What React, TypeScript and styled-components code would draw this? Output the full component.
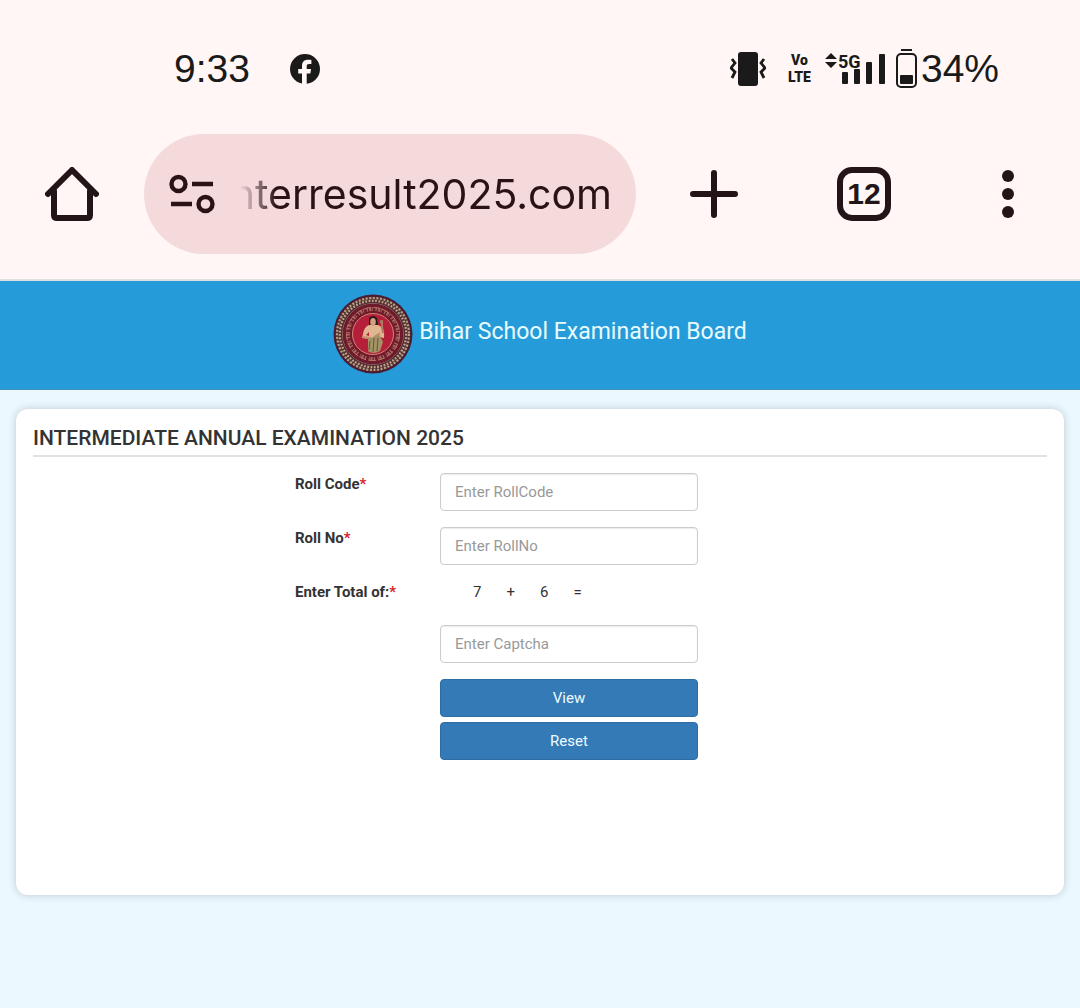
import React from "react";
import styled, { createGlobalStyle } from "styled-components";

const GlobalStyle = createGlobalStyle`
  *, *::before, *::after { box-sizing: border-box; }
  body {
    margin: 0;
    background: #ecf8ff;
    color: #333;
    font-family: Roboto, "Liberation Sans", sans-serif;
    font-size: 15px;
    line-height: 22px;
  }
`;

const BrowserChrome = styled.div`
  background: #fff6f5;
  color: #231517;
  border-bottom: 2px solid #dedfe0;
  padding-bottom: 25px;
`;

const StatusBar = styled.div`
  display: flex;
  justify-content: space-between;
  align-items: center;
  height: 134px;
  padding: 4px 81px 0 174px;
  color: #1a1a1a;
  font-family: "Liberation Sans", Arial, sans-serif;
  font-size: 39px;
  line-height: 48px;
`;

const StatusGroup = styled.div<{ $gap: number }>`
  display: flex;
  align-items: center;
  gap: ${(p) => p.$gap}px;
`;

const Volte = styled.span`
  display: flex;
  flex-direction: column;
  align-items: center;
  font-family: Roboto, sans-serif;
  font-size: 14px;
  font-weight: 900;
  line-height: 17px;
`;

const Battery = styled.span`
  display: flex;
  align-items: center;
  gap: 4px;
`;

const SignalText = styled.text`
  font-family: Roboto, sans-serif;
  font-size: 18px;
  font-weight: 700;
`;

const Toolbar = styled.nav`
  display: grid;
  grid-template-columns: 144px 1fr 156px 144px 144px;
  height: 120px;
`;

const ToolButton = styled.button`
  display: flex;
  align-items: center;
  justify-content: center;
  padding: 0;
  border: 0;
  background: none;
  color: inherit;
`;

const AddressBar = styled.label`
  display: flex;
  align-items: center;
  gap: 24px;
  min-width: 0;
  padding: 0 24px;
  border-radius: 60px;
  background: #f5dadc;
`;

const AddressInput = styled.input`
  flex: 1;
  min-width: 0;
  height: 64px;
  padding: 0;
  border: 0;
  outline: 0;
  background: none;
  color: #2b1315;
  direction: rtl;
  font-family: Inter, "Liberation Sans", sans-serif;
  font-size: 41px;
  font-weight: 400;
  mask-image: linear-gradient(to right, transparent, #000 36px);
`;

const TabCount = styled.span`
  display: grid;
  place-items: center;
  width: 54px;
  height: 54px;
  border: 6px solid currentColor;
  border-radius: 15px;
  font-family: "Liberation Sans", Arial, sans-serif;
  font-size: 30px;
  font-weight: 700;
  line-height: 40px;
`;

const SiteHeader = styled.header`
  display: flex;
  justify-content: center;
  gap: 6px;
  padding: 13px 16px 15px;
  background: #269bd9;
  border-bottom: 1px solid #3c94c4;
  color: #e8fbff;
`;

const SiteName = styled.h1`
  margin: 0;
  padding-top: 22px;
  font-size: 23px;
  font-weight: 400;
  line-height: 32px;
`;

const Card = styled.main`
  min-height: 486px;
  margin: 19px 16px;
  padding: 17px;
  border-radius: 12px;
  background: #fff;
  box-shadow: 0 0 8px rgba(0, 0, 0, 0.2);
`;

const CardTitle = styled.h2`
  margin: 0 0 16px;
  padding-bottom: 5px;
  border-bottom: 2px solid #e2e2e2;
  font-size: 21px;
  font-weight: 500;
  line-height: 24px;
`;

const Form = styled.form`
  display: flex;
  flex-direction: column;
  gap: 16px;
`;

const Row = styled.div`
  display: grid;
  grid-template-columns: 262fr 145fr 258fr 349fr;
`;

const Label = styled.label`
  grid-column: 2;
  font-weight: 700;
`;

const Required = styled.span`
  color: #d9232e;
`;

const Field = styled.input`
  grid-column: 3;
  min-width: 0;
  height: 38px;
  padding: 0 14px;
  border: 1px solid #ccc;
  border-radius: 4px;
  background: #fff;
  color: #555;
  font: inherit;
  box-shadow: inset 0 1px 1px rgba(0, 0, 0, 0.08);

  &::placeholder {
    color: #999;
    opacity: 1;
  }
`;

const Sum = styled.output`
  grid-column: 3;
  display: flex;
  gap: 25px;
  height: 28px;
  padding-left: 33px;
`;

const Actions = styled.div`
  grid-column: 3;
  display: flex;
  flex-direction: column;
  gap: 5px;
`;

const ActionButton = styled.button`
  height: 38px;
  padding: 0;
  border: 1px solid #2e6da4;
  border-radius: 4px;
  background: #337ab7;
  color: #effcff;
  font: inherit;
`;

const FacebookIcon = () => (
  <svg width="30" height="30" viewBox="0 0 30 30" aria-hidden="true">
    <circle cx="15" cy="15" r="15" fill="currentColor" />
    <path
      d="M12 30V19.5H8.2V15H12v-3c0-4.200 2.300-6.200 6-6.200 1.500 0 2.700.1 3.400.3v4h-2.200c-1.900 0-2.500.8-2.500 2.400V15h4.400l-.8 4.500h-3.600V30Z"
      fill="#fff6f5"
    />
  </svg>
);

const VibrateIcon = () => (
  <svg width="36" height="34" viewBox="0 0 36 34" aria-hidden="true">
    <rect x="8" y="0" width="20" height="34" rx="3" fill="currentColor" />
    <path
      d="M2 7l3 4-4 5 4 4-3 6M34 7l-3 4 4 5-4 4 3 6"
      fill="none"
      stroke="currentColor"
      strokeWidth="2.800"
    />
  </svg>
);

const SignalIcon = () => (
  <svg width="62" height="36" viewBox="0 0 62 36" aria-label="5G signal">
    <path d="M0 8l6-6 6 6ZM0 11h12l-6 6Z" fill="currentColor" />
    <SignalText x="13" y="17" fill="currentColor">5G</SignalText>
    <g fill="currentColor">
      <rect x="17" y="21" width="6" height="12" rx="1" />
      <rect x="29" y="18" width="6" height="15" rx="1" />
      <rect x="41" y="11" width="6" height="22" rx="1" />
      <rect x="54" y="3" width="6" height="30" rx="1" />
    </g>
  </svg>
);

const BatteryIcon = () => (
  <svg width="21" height="40" viewBox="0 0 21 40" aria-hidden="true">
    <path d="M5 1h11" stroke="currentColor" strokeWidth="2" />
    <rect x="1" y="5" width="19" height="33" rx="4" fill="none" stroke="currentColor" strokeWidth="2" />
    <rect x="4" y="26" width="13" height="9" rx="1" fill="currentColor" />
  </svg>
);

const HomeIcon = () => (
  <svg width="54" height="54" viewBox="0 0 54 54" fill="none" stroke="currentColor" strokeWidth="6" strokeLinecap="round" aria-hidden="true">
    <path d="M3 27L27 3l24 24" strokeLinejoin="round" />
    <path d="M9 24v24q0 3 3 3h30q3 0 3-3V24" />
  </svg>
);

const SiteSettingsIcon = () => (
  <svg width="48" height="40" viewBox="0 0 48 40" fill="none" stroke="#2b1315" strokeWidth="4.400" aria-hidden="true">
    <circle cx="10.500" cy="10" r="7" />
    <path d="M24 10h21M3 30h21" />
    <circle cx="37.500" cy="30" r="7" />
  </svg>
);

const PlusIcon = () => (
  <svg width="48" height="48" viewBox="0 0 48 48" aria-hidden="true">
    <path d="M24 3v42M3 24h42" stroke="currentColor" strokeWidth="6" strokeLinecap="round" />
  </svg>
);

const MoreIcon = () => (
  <svg width="12" height="48" viewBox="0 0 12 48" fill="currentColor" aria-hidden="true">
    <circle cx="6" cy="6" r="6" />
    <circle cx="6" cy="24" r="6" />
    <circle cx="6" cy="42" r="6" />
  </svg>
);

const BoardSeal = () => (
  <svg width="80" height="80" viewBox="0 0 80 80" role="img" aria-label="Board seal">
    <circle cx="40" cy="40" r="39.500" fill="#4b1b33" />
    <g fill="none">
      <circle cx="40" cy="40" r="34.500" stroke="#55322f" strokeWidth="6" />
      <circle cx="40" cy="40" r="36" stroke="#b89f8b" strokeWidth="2.200" strokeDasharray="2 1.600" />
      <circle cx="40" cy="40" r="33.200" stroke="#c2aa92" strokeWidth="2.200" strokeDasharray="1.700 1.600" />
      <circle cx="40" cy="40" r="30.600" stroke="#9d7568" strokeWidth="0.800" />
    </g>
    <circle cx="40" cy="40" r="30" fill="#701a2c" />
    <g fill="none" stroke="#b07868">
      <circle cx="40" cy="40" r="25" strokeWidth="4" strokeDasharray="1.400 1.300 2.200 .8 .9 2.600" opacity=".8" />
      <circle cx="40" cy="40" r="26.500" strokeWidth="1" strokeDasharray="8 2.500 6 2.500" />
    </g>
    <circle cx="40" cy="40" r="20.500" fill="#b51f3a" stroke="#d48478" strokeWidth="1" />
    <path d="M36 31q-5 2-6 9l-1 4 8 1-1-3-3-1 3-3v7l10-2 5 1q1-9-4-12-3-1-4-4h-4Z" fill="#e1b690" />
    <path d="M29 43l9 1M47 39l-6 4" stroke="#c7916f" strokeWidth="2" />
    <path d="M35 45q6-2 11-5l4 8-3 9q-7 4-12 0Z" fill="#a39366" />
    <path d="M37 47l-1 9M41 44l-1 14M45 44l-1 13" stroke="#645638" strokeWidth="1" />
    <path d="M36 24q4-4 8 0l1 7h-9Z" fill="#261a1e" />
    <ellipse cx="40" cy="28" rx="2.800" ry="4" fill="#d39f7c" />
    <path d="M48 29q-1-2 1-2v5l1 7" fill="none" stroke="#ae7863" strokeWidth="2" />
  </svg>
);

interface FieldRowProps {
  id: string;
  label: string;
  placeholder: string;
}

const FieldRow = ({ id, label, placeholder }: FieldRowProps) => (
  <Row>
    <Label htmlFor={id}>
      {label}
      <Required>*</Required>
    </Label>
    <Field id={id} type="text" placeholder={placeholder} />
  </Row>
);

export default function App() {
  return (
    <>
      <GlobalStyle />
      <BrowserChrome>
        <StatusBar>
          <StatusGroup $gap={40}>
            <span>9:33</span>
            <FacebookIcon />
          </StatusGroup>
          <StatusGroup $gap={9}>
            <StatusGroup $gap={22}>
              <VibrateIcon />
              <StatusGroup $gap={14}>
                <Volte>
                  <span>Vo</span>
                  <span>LTE</span>
                </Volte>
                <SignalIcon />
              </StatusGroup>
            </StatusGroup>
            <Battery>
              <BatteryIcon />
              <span>34%</span>
            </Battery>
          </StatusGroup>
        </StatusBar>
        <Toolbar>
          <ToolButton type="button" aria-label="Home"><HomeIcon /></ToolButton>
          <AddressBar>
            <SiteSettingsIcon />
            <AddressInput type="text" aria-label="Address" defaultValue="nterresult2025.com" />
          </AddressBar>
          <ToolButton type="button" aria-label="New tab"><PlusIcon /></ToolButton>
          <ToolButton type="button" aria-label="Tabs"><TabCount>12</TabCount></ToolButton>
          <ToolButton type="button" aria-label="Menu"><MoreIcon /></ToolButton>
        </Toolbar>
      </BrowserChrome>
      <SiteHeader>
        <BoardSeal />
        <SiteName>Bihar School Examination Board</SiteName>
      </SiteHeader>
      <Card>
        <CardTitle>INTERMEDIATE ANNUAL EXAMINATION 2025</CardTitle>
        <Form onSubmit={(e: React.FormEvent) => e.preventDefault()}>
          <FieldRow id="roll-code" label="Roll Code" placeholder="Enter RollCode" />
          <FieldRow id="roll-no" label="Roll No" placeholder="Enter RollNo" />
          <Row>
            <Label htmlFor="captcha">
              Enter Total of:<Required>*</Required>
            </Label>
            <Sum>
              <span>7</span>
              <span>+</span>
              <span>6</span>
              <span>=</span>
            </Sum>
          </Row>
          <Row>
            <Field id="captcha" type="text" placeholder="Enter Captcha" />
          </Row>
          <Row>
            <Actions>
              <ActionButton type="submit">View</ActionButton>
              <ActionButton type="reset">Reset</ActionButton>
            </Actions>
          </Row>
        </Form>
      </Card>
    </>
  );
}
